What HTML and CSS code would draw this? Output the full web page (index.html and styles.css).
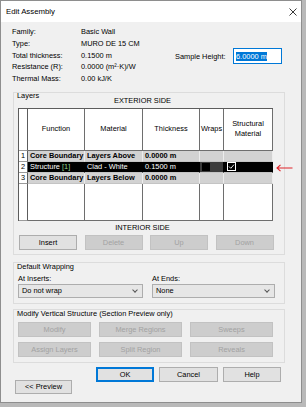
FILE: index.html
```html
<!DOCTYPE html>
<html lang="en">
<head>
    <meta charset="UTF-8">
    <title>Edit Assembly</title>
    <link rel="stylesheet" href="styles.css">
</head>
<body>
    <div class="dialog">
        <!-- title bar -->
        <div class="titlebar">
            <span>Edit Assembly</span>
            <svg class="close" width="8" height="8" viewBox="0 0 8 8">
                <path d="M0.5,0.5 L7.5,7.5 M7.5,0.5 L0.5,7.5" stroke="#222" stroke-width="0.9"/>
            </svg>
        </div>

        <div class="content">
            <!-- properties -->
            <div class="info">
                <div class="props">
                    <span>Family:</span><span>Basic Wall</span>
                    <span>Type:</span><span>MURO DE 15 CM</span>
                    <span>Total thickness:</span><span>0.1500 m</span>
                    <span>Resistance (R):</span><span>0.0000 (m²·K)/W</span>
                    <span>Thermal Mass:</span><span>0.00 kJ/K</span>
                </div>
                <div class="sample">
                    <span class="sample-label">Sample Height:</span>
                    <div class="textbox"><span class="selected">6.0000 m</span></div>
                </div>
            </div>

            <!-- layers -->
            <div class="group layers">
                <div class="group-title">Layers</div>
                <div class="grid-wrap">
                    <div class="side">EXTERIOR SIDE</div>
                    <table class="layer-table">
                        <tr class="head">
                            <td class="num"></td>
                            <td>Function</td>
                            <td>Material</td>
                            <td>Thickness</td>
                            <td>Wraps</td>
                            <td>Structural<br>Material</td>
                        </tr>
                        <tr class="core">
                            <td class="num">1</td>
                            <td>Core Boundary</td>
                            <td>Layers Above</td>
                            <td>0.0000 m</td>
                            <td></td>
                            <td></td>
                        </tr>
                        <tr class="sel">
                            <td class="num">2</td>
                            <td>Structure <span class="tag">[1]</span></td>
                            <td>Clad - White</td>
                            <td>0.1500 m</td>
                            <td class="wraps"><span class="box-off"></span></td>
                            <td>
                                <svg class="check" width="9" height="9" viewBox="0 0 9 9">
                                    <rect x="0.5" y="0.5" width="8" height="8" fill="none" stroke="#fff"/>
                                    <path d="M2,4.5 L3.8,6.3 L7,2.6" fill="none" stroke="#fff" stroke-width="0.9"/>
                                </svg>
                            </td>
                        </tr>
                        <tr class="core">
                            <td class="num">3</td>
                            <td>Core Boundary</td>
                            <td>Layers Below</td>
                            <td>0.0000 m</td>
                            <td></td>
                            <td></td>
                        </tr>
                        <tr class="blank">
                            <td class="num"></td>
                            <td></td>
                            <td></td>
                            <td></td>
                            <td></td>
                            <td></td>
                        </tr>
                    </table>
                    <div class="side">INTERIOR SIDE</div>
                    <div class="row-buttons">
                        <button class="btn">Insert</button>
                        <button class="btn" disabled>Delete</button>
                        <button class="btn" disabled>Up</button>
                        <button class="btn" disabled>Down</button>
                    </div>
                </div>
            </div>

            <!-- default wrapping -->
            <div class="group wrapping">
                <div class="group-title">Default Wrapping</div>
                <div class="wrap-fields">
                    <div class="field">
                        <div class="field-label">At Inserts:</div>
                        <div class="combo">Do not wrap<span class="chev"></span></div>
                    </div>
                    <div class="field">
                        <div class="field-label">At Ends:</div>
                        <div class="combo">None<span class="chev"></span></div>
                    </div>
                </div>
            </div>

            <!-- modify vertical structure -->
            <div class="group modify">
                <div class="group-title">Modify Vertical Structure (Section Preview only)</div>
                <div class="modify-buttons">
                    <button class="btn" disabled>Modify</button>
                    <button class="btn" disabled>Merge Regions</button>
                    <button class="btn" disabled>Sweeps</button>
                    <button class="btn" disabled>Assign Layers</button>
                    <button class="btn" disabled>Split Region</button>
                    <button class="btn" disabled>Reveals</button>
                </div>
            </div>

            <!-- footer -->
            <div class="footer">
                <button class="btn preview">&lt;&lt; Preview</button>
                <div class="actions">
                    <button class="btn default">OK</button>
                    <button class="btn cancel">Cancel</button>
                    <button class="btn">Help</button>
                </div>
            </div>
        </div>

        <!-- annotation arrow -->
        <svg class="pointer" width="17" height="8" viewBox="0 0 17 8">
            <path d="M16.5,4 L1,4 M4.5,0.8 L1,4 L4.5,7.2" fill="none" stroke="#e0242a" stroke-width="1.1"/>
        </svg>
    </div>
</body>
</html>
```

FILE: styles.css
```css
body {
    margin: 0;
    background: #b9b9b9;
    font-family: "Liberation Sans", Arial, sans-serif;
    font-size: 7.4px;
    color: #000;
}
.dialog {
    position: relative;
    width: 300px;
    height: 401px;
    background: #f0f0f0;
    border: 1px solid #8e8e8e;
}
.titlebar {
    height: 21px;
    background: #fff;
    display: flex;
    align-items: center;
    justify-content: space-between;
    padding: 0 4px 0 5px;
    font-size: 7.8px;
}
.content {
    padding-left: 11px;
}
.info {
    display: flex;
    margin-top: 4px;
}
.props {
    display: grid;
    grid-template-columns: 69px auto;
    line-height: 11.8px;
    width: 163px;
}
.sample {
    display: flex;
    align-items: center;
    margin-top: 22px;
    height: 16px;
}
.sample-label {
    width: 58px;
}
.textbox {
    width: 45px;
    height: 14px;
    background: #fff;
    border: 1px solid #0078d7;
    padding-left: 2px;
    display: flex;
    align-items: center;
}
.selected {
    background: #0078d7;
    color: #fff;
    line-height: 9px;
}
.group {
    width: 270px;
    margin-left: 1px;
    border: 1px solid #dcdcdc;
}
.group-title {
    padding-left: 3px;
    line-height: 8px;
    height: 8px;
}
.layers {
    margin-top: 7px;
    padding-bottom: 4px;
}
.layers .group-title {
    height: 3px;
    line-height: 6px;
}
.grid-wrap {
    margin-left: 4px;
    width: 255px;
}
.side {
    text-align: center;
    line-height: 10px;
    padding-right: 6px;
}
.layer-table {
    width: 255px;
    margin: 2px 0;
    border-spacing: 0;
    border-top: 1px solid #5c5c5c;
    border-left: 1px solid #5c5c5c;
    table-layout: fixed;
    background: #fff;
}
.layer-table td {
    border-right: 1px solid #6e6e6e;
    border-bottom: 1px solid #6e6e6e;
    padding: 0 0 0 2px;
    white-space: nowrap;
    overflow: hidden;
}
.layer-table td:nth-child(1) { width: 8px; }
.layer-table td:nth-child(2) { width: 56px; }
.layer-table td:nth-child(3) { width: 57px; }
.layer-table td:nth-child(4) { width: 56px; }
.layer-table td:nth-child(5) { width: 23px; }
.layer-table .head td {
    height: 41px;
    text-align: center;
    padding: 0;
    line-height: 10px;
}
.layer-table .core td,
.layer-table .sel td {
    height: 10px;
    line-height: 10px;
}
.layer-table .core td {
    background: #d2d2d2;
    font-weight: bold;
    border-right-color: #ececec;
    border-bottom-color: #c4c4c4;
}
.layer-table .sel td {
    background: #000;
    color: #fff;
    border-right-color: #000;
    border-bottom-color: #c4c4c4;
}
.layer-table .num,
.layer-table .core .num,
.layer-table .sel .num {
    background: #fff;
    color: #000;
    font-weight: normal;
    border-right: 1px solid #5c5c5c;
    border-bottom-color: #9a9a9a;
}
.layer-table .sel .wraps {
    background: #3c3c3c;
    padding-left: 2px;
}
.tag {
    color: #8fd18f;
}
.box-off {
    display: inline-block;
    width: 8px;
    height: 8px;
    background: #000;
    vertical-align: middle;
}
.check {
    display: block;
    margin-left: 1px;
}
.layer-table .blank td {
    height: 36px;
}
.row-buttons {
    display: grid;
    grid-template-columns: repeat(4, 58px);
    column-gap: 7.5px;
    margin: 2px 0 0 1px;
}
.btn {
    height: 15px;
    padding: 0;
    font-family: inherit;
    font-size: 7.4px;
    color: #000;
    background: #e1e1e1;
    border: 1px solid #adadad;
}
.btn:disabled {
    background: #cdcdcd;
    border-color: #c2c2c2;
    color: #a2a2a2;
}
.wrapping {
    margin-top: 7px;
    padding-bottom: 5px;
}
.wrap-fields {
    display: grid;
    grid-template-columns: 125px 123px;
    column-gap: 9px;
    padding-left: 4px;
    margin-top: 3px;
}
.field-label {
    line-height: 10px;
}
.combo {
    position: relative;
    height: 12px;
    line-height: 12px;
    padding-left: 3px;
    background: #e6e6e6;
    border: 1px solid #adadad;
}
.chev {
    position: absolute;
    right: 5px;
    top: 3px;
    width: 3px;
    height: 3px;
    border-right: 1px solid #555;
    border-bottom: 1px solid #555;
    transform: rotate(45deg);
}
.modify {
    margin-top: 5px;
    padding-bottom: 5px;
}
.modify-buttons {
    display: grid;
    grid-template-columns: 73px 83px 83px;
    column-gap: 8px;
    row-gap: 5px;
    padding-left: 4px;
    margin-top: 4px;
}
.footer {
    display: flex;
    justify-content: space-between;
    height: 27px;
    margin-top: 4px;
    padding: 0 20px 0 3px;
}
.preview {
    align-self: flex-end;
    width: 57px;
    height: 14px;
}
.actions {
    display: flex;
    gap: 5px;
    align-self: flex-start;
}
.actions .btn {
    width: 58px;
}
.actions .cancel {
    width: 59px;
}
.default {
    border-color: #0078d7;
    box-shadow: inset 0 0 0 1px #0078d7;
}
.pointer {
    position: absolute;
    left: 275px;
    top: 163px;
}
```
